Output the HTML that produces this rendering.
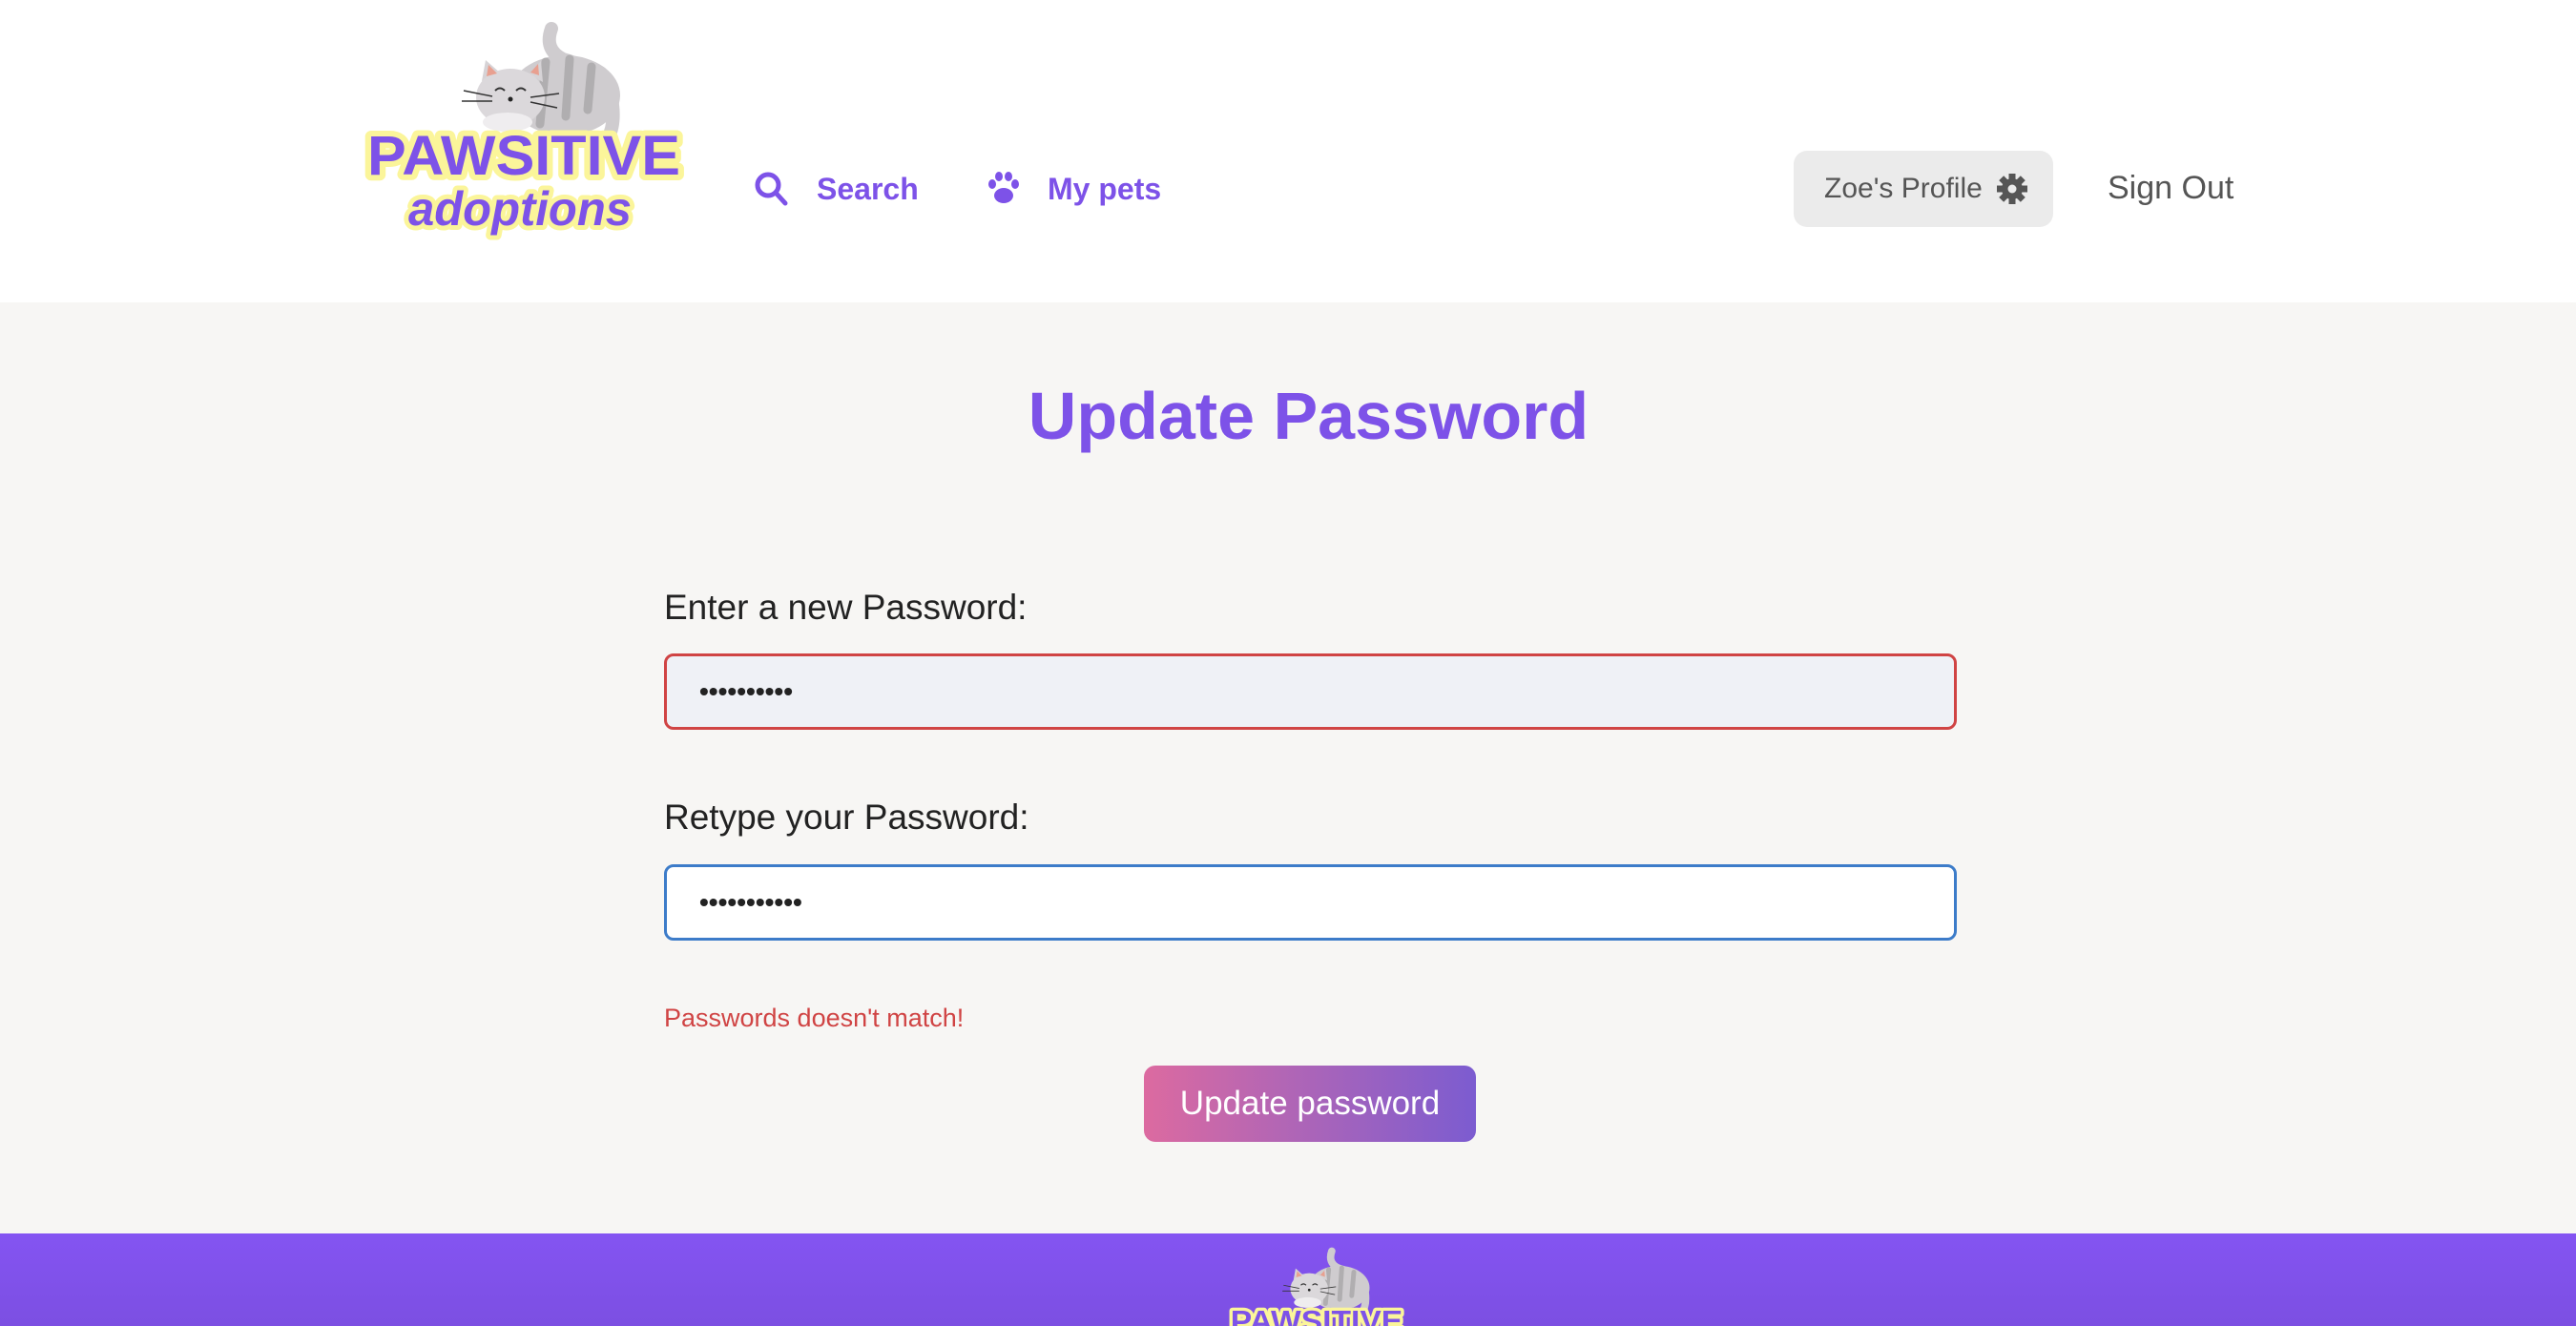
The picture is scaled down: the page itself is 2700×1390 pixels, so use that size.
<!DOCTYPE html>
<html><head><meta charset="utf-8"><style>
*{margin:0;padding:0;box-sizing:border-box}
body{width:2700px;height:1390px;overflow:hidden;background:#f7f6f4;font-family:"Liberation Sans",sans-serif;position:relative}
.hdr{position:absolute;left:0;top:0;width:2700px;height:317px;background:#fff}
.abs{position:absolute;white-space:nowrap}
.nav{color:#7d52e8;font-weight:bold;font-size:32px}
.prof{left:1880px;top:158px;width:272px;height:80px;background:#ebebeb;border-radius:14px;color:#555;font-size:30px;display:flex;align-items:center;padding-left:32px;gap:14px}
.lbl{font-size:37px;color:#222;left:696px}
.inp{left:696px;width:1355px;height:80px;border-radius:10px;border:3.5px solid;padding-left:34px;font-size:28px;letter-spacing:0px;display:flex;align-items:center;color:#222;font-weight:bold}
.btn{left:1199px;top:1117px;width:348px;height:80px;border-radius:12px;background:linear-gradient(90deg,#dc6aa0,#b466b4 40%,#7c5cd0);color:#fff;font-size:35px;display:flex;align-items:center;justify-content:center}
.foot{position:absolute;left:0;top:1293px;width:2700px;height:97px;background:linear-gradient(#8454f2,#7c4fe2)}
</style></head><body>
<div class="hdr"></div>
<svg class="abs" style="left:0;top:0" width="1200" height="317">
<defs><g id="logo">
<path d="M578 30 q-8 22 12 32 q45 12 52 48 q3 25 -8 40" fill="none" stroke="#cfcccf" stroke-width="14" stroke-linecap="round"/>
<ellipse cx="592" cy="100" rx="58" ry="42" fill="#cfcccf"/>
<path d="M572 65 l-6 65 M597 62 l-4 60 M620 70 l-4 45" stroke="#b0aeb0" stroke-width="9" stroke-linecap="round"/>
<path d="M505 85 l4 -22 l16 14z M555 78 l12 -14 l2 22z" fill="#d6d3d6"/>
<ellipse cx="535" cy="102" rx="36" ry="30" fill="#dbd8db"/>
<path d="M510 80 l2 -12 l9 9z M556 76 l8 -9 l1 12z" fill="#e8a090"/>
<path d="M519 95 q5 -5 10 0 M541 95 q5 -5 10 0" fill="none" stroke="#333" stroke-width="2"/>
<circle cx="535" cy="104" r="2.5" fill="#222"/>
<path d="M486 95 l30 6 M484 106 l32 0 M556 102 l30 -4 M556 107 l28 6" stroke="#333" stroke-width="1.5"/>
<ellipse cx="532" cy="128" rx="26" ry="10" fill="#efedef"/>
<text x="385" y="183" font-family="Liberation Sans" font-weight="bold" font-size="58" textLength="328" lengthAdjust="spacingAndGlyphs" fill="#7d52e8" stroke="#fbf59a" stroke-width="12" paint-order="stroke" stroke-linejoin="round">PAWSITIVE</text>
<text x="428" y="236" font-family="Liberation Sans" font-weight="bold" font-style="italic" font-size="50" textLength="234" lengthAdjust="spacingAndGlyphs" fill="#7d52e8" stroke="#fbf59a" stroke-width="10" paint-order="stroke" stroke-linejoin="round">adoptions</text>
</g></defs>
<use href="#logo"/>
<circle cx="805" cy="194" r="11" fill="none" stroke="#7d52e8" stroke-width="5"/>
<path d="M813 202 l10 11" stroke="#7d52e8" stroke-width="5" stroke-linecap="round"/>
<g fill="#7d52e8"><ellipse cx="1052" cy="205" rx="10" ry="8"/><ellipse cx="1040" cy="193" rx="4" ry="5"/><ellipse cx="1047" cy="185" rx="4" ry="5"/><ellipse cx="1057" cy="185" rx="4" ry="5"/><ellipse cx="1064" cy="193" rx="4" ry="5"/></g>
</svg>
<div class="abs nav" style="left:856px;top:180px">Search</div>
<div class="abs nav" style="left:1098px;top:180px">My pets</div>
<div class="abs prof">Zoe's Profile
<svg width="34" height="34" viewBox="0 0 34 34"><g fill="#555" transform="translate(17 17)"><circle r="11"/><rect x="-3.5" y="-16" width="7" height="32"/><rect x="-3.5" y="-16" width="7" height="32" transform="rotate(45)"/><rect x="-3.5" y="-16" width="7" height="32" transform="rotate(90)"/><rect x="-3.5" y="-16" width="7" height="32" transform="rotate(135)"/><circle r="4.5" fill="#ebebeb"/></g></svg></div>
<div class="abs" style="left:2209px;top:178px;font-size:34px;color:#555">Sign Out</div>
<div class="abs" style="left:0;width:2743px;text-align:center;top:396px;font-size:70px;font-weight:bold;color:#7d52e8">Update Password</div>
<div class="abs lbl" style="top:616px">Enter a new Password:</div>
<div class="abs inp" style="top:685px;border-color:#d04444;background:#eff1f6">••••••••••</div>
<div class="abs lbl" style="top:836px">Retype your Password:</div>
<div class="abs inp" style="top:906px;border-color:#3d7cc9;background:#fff">•••••••••••</div>
<div class="abs" style="left:696px;top:1052px;font-size:27px;color:#d04444">Passwords doesn't match!</div>
<div class="abs btn">Update password</div>
<div class="foot"></div>
<svg class="abs" style="left:0;top:0" width="2700" height="1390"><use href="#logo" transform="translate(1078 1295) scale(0.55)"/></svg>
</body></html>
